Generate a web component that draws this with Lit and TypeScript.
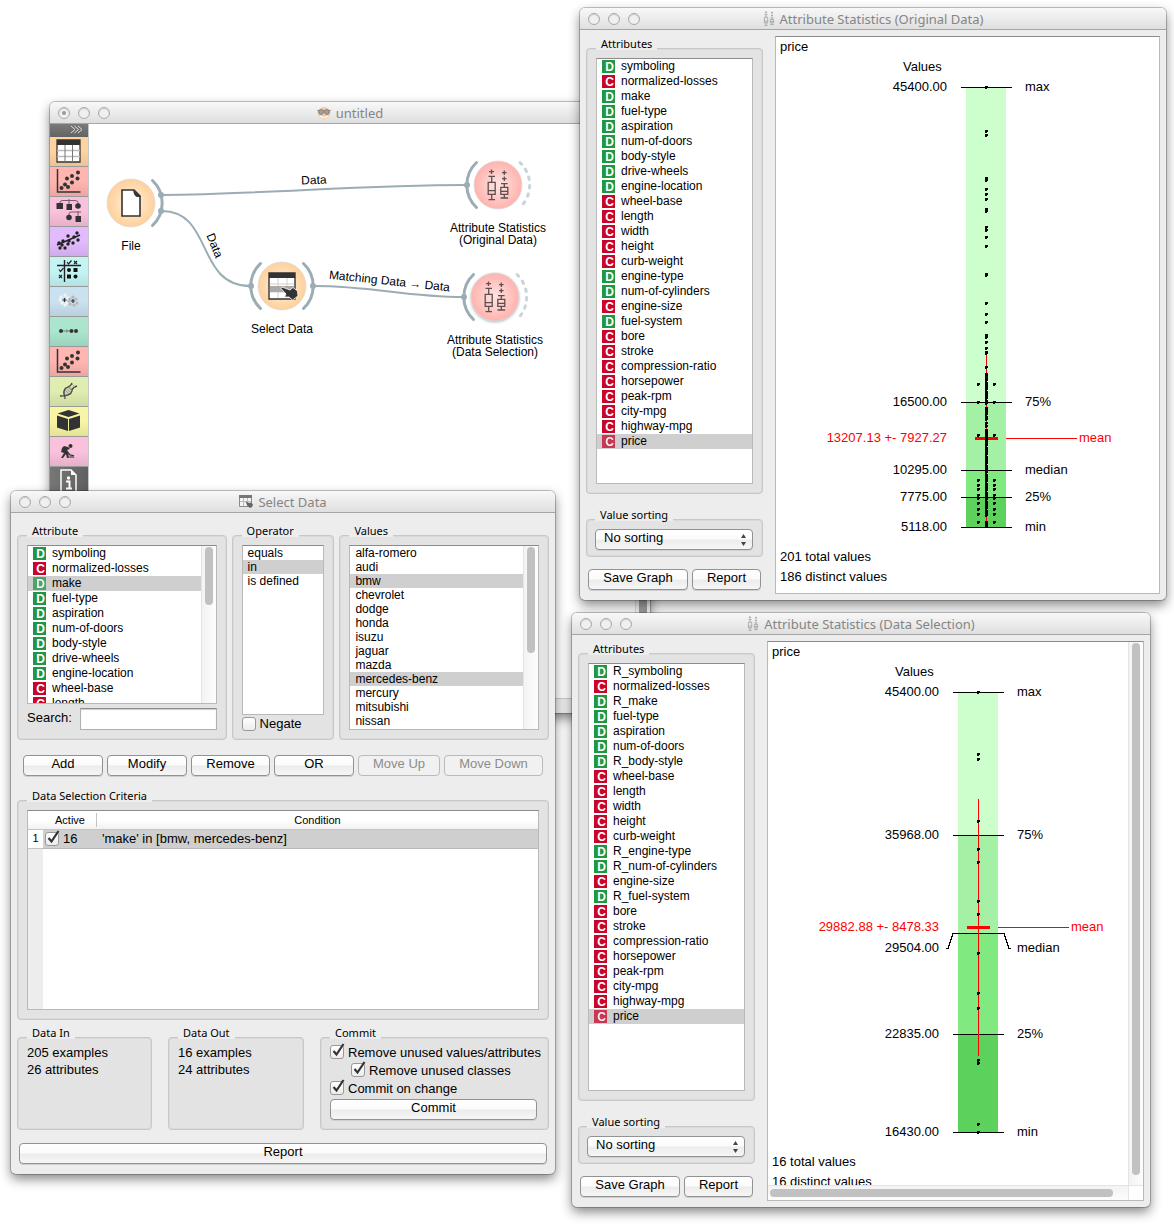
import { LitElement, html, svg, css, nothing } from "lit";
import { customElement, property } from "lit/decorators.js";
import { classMap } from "lit/directives/class-map.js";

type Kind = "D" | "C";
interface Attr { kind: Kind; name: string; }

const parse = (text: string): Attr[] =>
  text.split(" ").map((item) => {
    const [kind, name] = item.split(":");
    return { kind: kind as Kind, name };
  });

const ORIGINAL = parse(
  "D:symboling C:normalized-losses D:make D:fuel-type D:aspiration D:num-of-doors D:body-style " +
  "D:drive-wheels D:engine-location C:wheel-base C:length C:width C:height C:curb-weight " +
  "D:engine-type D:num-of-cylinders C:engine-size D:fuel-system C:bore C:stroke " +
  "C:compression-ratio C:horsepower C:peak-rpm C:city-mpg C:highway-mpg C:price");

const SELECTION = parse(
  "D:R_symboling C:normalized-losses D:R_make D:fuel-type D:aspiration D:num-of-doors " +
  "D:R_body-style C:wheel-base C:length C:width C:height C:curb-weight D:R_engine-type " +
  "D:R_num-of-cylinders C:engine-size D:R_fuel-system C:bore C:stroke C:compression-ratio " +
  "C:horsepower C:peak-rpm C:city-mpg C:highway-mpg C:price");

/* Rows that the short list in the Select Data window can show at once. */
const VISIBLE_ROWS = 11;

const MAKES = ["alfa-romero", "audi", "bmw", "chevrolet", "dodge", "honda", "isuzu", "jaguar",
  "mazda", "mercedes-benz", "mercury", "mitsubishi", "nissan"];

const shared = css`
  * { box-sizing: border-box; }
  fieldset {
    margin: 0;
    min-width: 0;
    padding: 0 9px 9px;
    border: 1px solid #c8c8c8;
    border-radius: 4px;
    background: #e3e3e3;
    box-shadow: inset 0 0 0 1px #dadada;
  }
  legend {
    height: 20px;
    padding: 0 5px;
    font: 11px/12px "Noto Sans", "Open Sans", sans-serif;
    background: linear-gradient(#ededed, #ededed) no-repeat 0 0 / 100% 12px;
  }
  button {
    height: 21px;
    padding: 0 4px 3px;
    border: 1px solid #929292;
    border-radius: 4px;
    background: linear-gradient(#ffffff 0%, #fbfbfb 48%, #ececec 52%, #f6f6f6 100%);
    box-shadow: 0 1px 0 #cfcfcf;
    font: 13px/16px "Liberation Sans", Arial, sans-serif;
    color: #000;
    white-space: nowrap;
  }
  button:disabled {
    color: #8c8c8c;
    border-color: #bababa;
    background: #f1f1f1;
    box-shadow: none;
  }
  .box {
    display: flex;
    background: #fff;
    border: 1px solid #b9b9b9;
    border-top-color: #8b8b8b;
    overflow: hidden;
  }
  .track {
    flex: none;
    width: 15px;
    padding: 1px 3px;
    border-left: 1px solid #e4e4e4;
    background: linear-gradient(90deg, #f3f3f3, #fdfdfd);
  }
  .thumb { width: 8px; border-radius: 4px; background: #c1c1c1; }
  ul {
    flex: 1;
    min-width: 0;
    margin: 0;
    padding: 0;
    list-style: none;
    font: 12px/14px "Liberation Sans", Arial, sans-serif;
  }
  li { padding-left: 5px; white-space: nowrap; }
  li.on { background: #cfcfcf; }
`;

/* ---------- icons ---------- */

const boxplots = (color: string, width = 1.5) => svg`
  <g fill="none" stroke=${color} stroke-width=${width}>
    <path d="M5.500 .5v4.500M3 2.700h5M2.500 7.300h6.500M5.700 7.300v6M2.200 13.300h7v12h-7zM2.200 21.700h7M5.700 25.300v5.400M2.500 30.700h6.500"/>
    <path d="M18.300 1.500v4.500M16 3.700h4.600M18.300 7.500v4.500M16 9.700h4.600M15 14.700h6.600M18.300 14.700v3.600M14.800 18.300h7v7h-7zM14.800 22.300h7M18.300 25.300v3.700M14.500 29h7.600"/>
  </g>`;

const iconPlots = html`<svg width="12" height="15" viewBox="0 0 24 32">${boxplots("#a4a4a4", 1.8)}</svg>`;

const iconOrange = html`<svg width="14" height="14" viewBox="0 0 14 14">
  <circle cx="7" cy="7" r="6" fill="#f4c99a"/>
  <path d="M3 10q4 3 8 0" fill="none" stroke="#fff" stroke-width="1.200"/>
  <path d="M0 4.500h14" stroke="#a09890" stroke-width="1.200"/>
  <circle cx="4" cy="6" r="2.400" fill="#9da3aa" stroke="#8a7d70"/>
  <circle cx="10" cy="6" r="2.400" fill="#9da3aa" stroke="#8a7d70"/>
</svg>`;

const hand = "M-1 1.500L0 0 8 3 11 .5 15.500 4 16 9 10.500 13 7 10 2.500 10 4 7z";

const iconSelect = html`<svg width="14" height="13" viewBox="0 0 14 13">
  <path d="M.5.5h12v11h-12z" fill="#f4f4f4" stroke="#8a8a8a"/>
  <path d="M0 0h13v3H0z" fill="#777"/>
  <path d="M1 6.500h11M4.500 3v8M8.500 3v8" stroke="#bbb"/>
  <path d="M6.500 6.500l4 1.500 1.500-.5 2 2-1 2.500-2 1-2.500-2z" fill="#666"/>
</svg>`;

const scatter = svg`<path d="M1.500 0v23h23" fill="none" stroke="#333" stroke-width="1.500"/>
  ${[[5.500, 19], [9, 15.500], [12, 18], [11, 9.500], [16, 13.500], [16, 7], [21.500, 9.500], [22, 3.500]].map(
    ([x, y]) => svg`<circle cx=${x} cy=${y} r="2" fill="#333"/>`)}`;

const TOOLS = [
  { name: "data", art: svg`<path d="M1 1h23v22H1z" fill="#fff" stroke="#333" stroke-width="1.300"/>
      <path d="M1 1h23v5H1z" fill="#333"/><path d="M1 11.500h23M1 17.500h23" stroke="#bbb" stroke-width="1.500"/>
      <path d="M9 6v17M16.500 6v17" stroke="#777"/>` },
  { name: "visualize", art: scatter },
  { name: "classify", art: svg`<path d="M4 5V3.500q0-2 3-2h12q3 0 3 2V6M13 0v6M13 16v-1q0-2 2-2h10M22 12v6" fill="none" stroke="#7a5a68"/>
      <path d="M.5 4h6.500v6H.5zM10.500 5h5.500v6h-5.500zM19.500 17h5.500v6h-5.500z" fill="#333"/>
      <circle cx="22" cy="7" r="2.800" fill="#333"/><circle cx="13" cy="18.500" r="2.800" fill="#333"/>` },
  { name: "regression", art: svg`<path d="M1 16L24 6" stroke="#222" stroke-width="1.500"/>
      ${[[3, 14], [4, 19], [9, 19], [7, 12], [6, 16], [12, 7], [13, 12], [17, 14], [18, 8], [21, 4], [22, 11], [12, 15]].map(
        ([x, y]) => svg`<circle cx=${x} cy=${y} r="1.700" fill="#222"/>`)}` },
  { name: "evaluate", art: svg`<path d="M8.500 1v22M1 6.500h24" stroke="#222" stroke-width="1.400"/>
      <path d="M11 3l1.500 2 3-3.500M3 10.500l1.500 2 3-3.500M18 2l3 3M21 2l-3 3M3 16l3 3M6 16l-3 3" fill="none" stroke="#222" stroke-width="1.200"/>
      <circle cx="13" cy="11" r="2" fill="#111"/><path d="M17.500 9h4v4h-4zM11 15.500h4v4h-4z" fill="#111"/><circle cx="19.500" cy="17.500" r="2" fill="#111"/>` },
  { name: "unsupervised", art: svg`${[[5, 8], [9, 6], [12, 9], [6, 14], [11, 14], [4, 11], [9, 16]].map(
        ([x, y]) => svg`<circle cx=${x} cy=${y} r="1.700" fill="#f2f2f2"/>`)}
      ${[[14, 10], [17, 8], [20, 10], [21, 14], [18, 16], [14, 15], [13, 12]].map(
        ([x, y]) => svg`<circle cx=${x} cy=${y} r="1.600" fill="#b4b8bc"/>`)}
      <path d="M8.500 9v4M6.500 11h4M17 10v4M15 12h4" stroke="#333" stroke-width="1.200"/>` },
  { name: "associate", art: svg`<path d="M6 12h8" stroke="#7c9c90" stroke-width="1.400"/><path d="M10 10l3 2-3 2z" fill="#7c9c90"/>
      <circle cx="5" cy="12" r="2" fill="#333"/><circle cx="15.500" cy="12" r="2" fill="#333"/><circle cx="20" cy="12" r="2" fill="#333"/>` },
  { name: "scatter", art: scatter },
  { name: "bio", art: svg`<circle cx="12" cy="12" r="4" fill="#cfd8a8" stroke="#999"/>
      <path d="M4 17q6 0 8-1 4-2 4-5 1-3 5-4M9 20q0-3-1-5-1-5 4-7 3-1 4-4" fill="none" stroke="#444" stroke-width="1.300"/>
      <path d="M10 9l5 5M9 11l4 4M12 8l4 4M6 16l3 3M16 5l3 3" stroke="#888" stroke-width=".8"/>` },
  { name: "prototypes", art: svg`<path d="M12.500 1l11 3.500-11 3.500-11-3.500zM1 6.500l11 3.500v12L1 18.500zM24 6.500l-11 3.500v12l11-3.500z" fill="#333"/>` },
  { name: "development", art: svg`<circle cx="14.500" cy="7" r="2" fill="#333"/>
      <path d="M12 8L8 7l-2 2-1 4 3 1-3 5h2l3-4 1 4h2l-1-6-1-2 3-1z" fill="#333"/>
      <path d="M8 9l6 7 4 1" fill="none" stroke="#333" stroke-width="1.300"/>
      <path d="M12 19q3-5 7 0z" fill="#777"/>` },
  { name: "info", art: svg`<path d="M5 1h10l5 5v20H5z" fill="none" stroke="#fff" stroke-width="1.500"/><path d="M15 1v5h5" fill="#fff"/>
      <circle cx="12.500" cy="9" r="1.700" fill="#fff"/><path d="M10 12.500h3.500V19M10 19.500h6" fill="none" stroke="#fff" stroke-width="2"/>` },
];

/* ---------- window frame ---------- */

@customElement("desk-window")
class DeskWindow extends LitElement {
  @property() heading = "";
  @property({ type: Boolean }) edited = false;

  static styles = [shared, css`
    :host {
      display: flex;
      flex-direction: column;
      background: #ededed;
      border-radius: 5px;
      overflow: hidden;
      box-shadow: 0 0 0 1px rgba(0, 0, 0, 0.22), 0 5px 12px rgba(0, 0, 0, 0.48);
    }
    header {
      display: grid;
      grid-template-columns: 1fr auto 1fr;
      align-items: center;
      height: 22px;
      padding: 0 8px;
      border-bottom: 1px solid #a5a5a5;
      background: linear-gradient(#f8f8f8, #dfdfdf);
    }
    .lights { display: flex; gap: 8px; }
    .light {
      display: grid;
      place-items: center;
      width: 12px;
      height: 12px;
      border: 1px solid #a9a9a9;
      border-radius: 50%;
      background: #f0f0f0;
      box-shadow: inset 0 1px 1px #ccc;
    }
    .dot { width: 4px; height: 4px; border-radius: 50%; background: #999; }
    .title {
      display: flex;
      align-items: center;
      gap: 5px;
      font: 13px/20px "Noto Sans", "Open Sans", sans-serif;
      color: #858585;
      white-space: nowrap;
    }
    .icon { display: flex; }
    .body { flex: 1; display: flex; flex-direction: column; min-height: 0; }
  `];

  render() {
    return html`
      <header>
        <div class="lights">
          <span class="light">${this.edited ? html`<span class="dot"></span>` : nothing}</span>
          <span class="light"></span><span class="light"></span>
        </div>
        <div class="title"><span class="icon"><slot name="icon"></slot></span><span>${this.heading}</span></div>
      </header>
      <div class="body"><slot></slot></div>`;
  }
}

/* ---------- list of attributes ---------- */

@customElement("attribute-list")
class AttributeList extends LitElement {
  @property({ attribute: false }) items: Attr[] = [];
  @property() selected = "";

  static styles = [shared, css`
    :host { display: block; flex: 1; min-width: 0; overflow: hidden; }
    li { display: flex; align-items: flex-start; gap: 6px; height: 15px; }
    .badge {
      width: 13px;
      height: 13px;
      margin-top: 1px;
      padding-left: 2px;
      font: bold 12px/14px "Liberation Sans", Arial, sans-serif;
      color: #fff;
      overflow: hidden;
      text-align: center;
    }
    .D { background: #1f9745; }
    .C { background: #c8052b; }
    .on .badge { opacity: 0.75; }
  `];

  render() {
    return html`<ul role="listbox">${this.items.map((a) => {
      const on = a.name === this.selected;
      return html`<li role="option" aria-selected=${on} class=${classMap({ on })}>
        <span class="badge ${a.kind}">${a.kind}</span><span>${a.name}</span></li>`;
    })}</ul>`;
  }
}

/* ---------- distribution plot ---------- */

interface Plot {
  total: string; distinct: string;
  marks: { y: number; value: string; label: string; bend?: number }[];
  mean: { y: number; value: string; from: number; to: number };
  dots: number[]; side: number[]; solid: [number, number][];
}

const FILLS = ["#ccffcc", "#a4f0a4", "#80ea80", "#5cd15c"];
const AXIS = 210;

@customElement("value-plot")
class ValuePlot extends LitElement {
  @property({ attribute: false }) data!: Plot;

  static styles = css`
    :host { display: block; overflow: hidden; }
    svg { display: block; }
    text { font: 13px "Liberation Sans", Arial, sans-serif; }
    .end { text-anchor: end; }
    .red { fill: #f00; }
    .line { fill: none; stroke: #000; shape-rendering: crispEdges; }
    .crisp { shape-rendering: crispEdges; }
  `;

  private dot(x: number, y: number) {
    return svg`<path d="M${x - 1} ${y - 1}h3v2h-1v1h-2z"/>`;
  }

  render() {
    const { marks, mean, dots, side, solid, total, distinct } = this.data;
    const packed = solid.flatMap(([a, b]) => {
      const ys: number[] = [];
      for (let y = a + 1, k = 0; y < b; k++, y += k % 4 ? 2 : 3) ys.push(y);
      return ys;
    });
    return html`<svg width="360" height="556" viewBox="0 0 360 556">
      <text x="4" y="14">price</text>
      <text x="127" y="34">Values</text>
      <g class="crisp">
        ${marks.slice(1).map((m, i) => svg`<rect x="190" y=${marks[i].y} width="40" height=${m.y - marks[i].y} fill=${FILLS[i]}/>`)}
      </g>
      ${marks.map((m) => svg`
        <path class="line" d=${m.bend
          ? `M178 ${m.bend + 0.5}h2L185 ${m.y + 0.5}H236L241 ${m.bend + 0.5}h2`
          : `M185 ${m.y + 0.5}h51`}/>
        <text class="end" x="171" y=${(m.bend ?? m.y) + 4}>${m.value}</text>
        <text x="249" y=${(m.bend ?? m.y) + 4}>${m.label}</text>`)}
      <g class="crisp">
        <rect x="210" y=${mean.from} width="1" height=${mean.to - mean.from} fill="#f00"/>
        ${solid.map(([a, b]) => svg`<rect x="209" y=${a} width="2" height=${b - a}/>`)}
        ${[...dots, ...packed].map((y) => this.dot(AXIS, y))}
        ${side.map((y) => [this.dot(202, y), this.dot(218, y)])}
        <rect x="199" y=${mean.y - 1} width="23" height="3" fill="#f00"/>
        <rect x="230" y=${mean.y} width="71" height="1" fill="#f00"/>
        ${solid.length ? svg`<rect x="209" y=${mean.y - 2} width="3" height="5"/>` : nothing}
      </g>
      <text class="end red" x="171" y=${mean.y + 4}>${mean.value}</text>
      <text class="red" x="303" y=${mean.y + 4}>mean</text>
      <text x="4" y="524">${total}</text>
      <text x="4" y="544">${distinct}</text>
    </svg>`;
  }
}

const PLOT_ORIGINAL: Plot = {
  total: "201 total values",
  distinct: "186 distinct values",
  marks: [
    { y: 50, value: "45400.00", label: "max" },
    { y: 365, value: "16500.00", label: "75%" },
    { y: 433, value: "10295.00", label: "median" },
    { y: 460, value: "7775.00", label: "25%" },
    { y: 490, value: "5118.00", label: "min" },
  ],
  mean: { y: 401, value: "13207.13 +- 7927.27", from: 314, to: 490 },
  dots: [50, 94, 98, 141, 143, 152, 157, 162, 172, 174, 190, 193, 200, 209, 237, 238, 266, 277, 285, 298, 300,
    305, 311, 315, 316, 330, 386, 389],
  side: [347, 365, 398, 443, 448, 452, 458, 461, 466, 472, 477, 485],
  solid: [[336, 367], [370, 384], [392, 480], [484, 491]],
};

const PLOT_SELECTION: Plot = {
  total: "16 total values",
  distinct: "16 distinct values",
  marks: [
    { y: 50, value: "45400.00", label: "max" },
    { y: 193, value: "35968.00", label: "75%" },
    { y: 291, value: "29504.00", label: "median", bend: 306 },
    { y: 392, value: "22835.00", label: "25%" },
    { y: 490, value: "16430.00", label: "min" },
  ],
  mean: { y: 285, value: "29882.88 +- 8478.33", from: 157, to: 414 },
  dots: [50, 112, 117, 179, 207, 220, 259, 272, 311, 351, 366, 418, 421, 482, 490],
  side: [],
  solid: [],
};

/* ---------- attribute statistics ---------- */

@customElement("attribute-statistics")
class AttributeStatistics extends LitElement {
  @property({ attribute: false }) items: Attr[] = [];
  @property({ attribute: false }) plot!: Plot;
  @property({ type: Boolean }) scrolling = false;

  static styles = [shared, css`
    :host { display: grid; grid-template-columns: 177px minmax(0, 1fr); gap: 12px; padding: 6px; }
    .side { display: flex; flex-direction: column; padding: 2px 0 4px; }
    .attributes { flex: 1; display: flex; }
    .attributes .box { flex: 1; min-width: 0; }
    .sorting { margin-top: 15px; padding: 0 9px 6px 8px; }
    .picker { position: relative; display: block; }
    select {
      appearance: none;
      display: block;
      width: 100%;
      height: 21px;
      padding: 0 20px 3px 8px;
      border: 1px solid #929292;
      border-radius: 4px;
      background: linear-gradient(#ffffff 0%, #fbfbfb 48%, #ececec 52%, #f6f6f6 100%);
      box-shadow: 0 1px 0 #cfcfcf;
      font: 13px/16px "Liberation Sans", Arial, sans-serif;
      color: #000;
    }
    .arrows { position: absolute; right: 6px; top: 5px; pointer-events: none; }
    .actions { display: grid; grid-template-columns: 100fr 69fr; gap: 4px; margin-top: 12px; padding: 0 2px; }
    .panel { display: grid; grid-template-columns: minmax(0, 1fr); }
    .panel.scroll { grid-template-columns: minmax(0, 1fr) 15px; grid-template-rows: 543px 15px; }
    .vbar { padding: 1px 3px; border-left: 1px solid #e4e4e4; background: linear-gradient(90deg, #f3f3f3, #fdfdfd); }
    .vthumb { width: 8px; height: 532px; border-radius: 4px; background: #c1c1c1; }
    .hbar { padding: 3px 15px 3px 2px; border-top: 1px solid #e4e4e4; background: linear-gradient(#f3f3f3, #fdfdfd); }
    .hthumb { height: 8px; border-radius: 4px; background: #c1c1c1; }
    .corner { border: 1px solid #e4e4e4; border-width: 1px 0 0 1px; }
  `];

  render() {
    return html`
      <div class="side">
        <fieldset class="attributes">
          <legend>Attributes</legend>
          <div class="box"><attribute-list .items=${this.items} selected="price"></attribute-list></div>
        </fieldset>
        <fieldset class="sorting">
          <legend>Value sorting</legend>
          <span class="picker">
            <select aria-label="Value sorting"><option>No sorting</option></select>
            <svg class="arrows" width="7" height="12" viewBox="0 0 7 12"><path d="M3.500 0l2.500 4H1zM3.500 12L6 8H1z" fill="#444"/></svg>
          </span>
        </fieldset>
        <div class="actions"><button>Save Graph</button><button>Report</button></div>
      </div>
      <div class="box panel ${this.scrolling ? "scroll" : ""}">
        <value-plot .data=${this.plot}></value-plot>
        ${this.scrolling ? html`
          <div class="vbar"><div class="vthumb"></div></div>
          <div class="hbar"><div class="hthumb"></div></div>
          <div class="corner"></div>` : nothing}
      </div>`;
  }
}

/* ---------- select data ---------- */

@customElement("select-data")
class SelectData extends LitElement {
  static styles = [shared, css`
    :host {
      display: flex;
      flex-direction: column;
      padding: 12px 6px 10px;
      font: 13px/17px "Liberation Sans", Arial, sans-serif;
    }
    .top { display: grid; grid-template-columns: 210fr 103fr 210fr; gap: 5px; }
    .top fieldset { display: flex; flex-direction: column; }
    .attrs { height: 159px; }
    .attrs .thumb { height: 58px; }
    .search { display: flex; align-items: center; gap: 8px; margin-top: 4px; }
    .search label { padding-bottom: 3px; }
    .search input {
      flex: 1;
      min-width: 0;
      height: 22px;
      border: 1px solid #b0b0b0;
      border-top-color: #8b8b8b;
      box-shadow: inset 0 1px 1px #ccc;
    }
    .ops { flex: 1; }
    .makes { height: 185px; }
    .makes .thumb { height: 106px; }
    .check { display: flex; align-items: center; gap: 4px; height: 18px; white-space: nowrap; }
    .negate { height: 13px; margin-top: 2px; }
    .mark { position: relative; display: block; width: 14px; height: 14px; }
    .mark input {
      appearance: none;
      display: block;
      width: 14px;
      height: 14px;
      margin: 0;
      border: 1px solid #999;
      border-radius: 3px;
      background: linear-gradient(#fff, #ececec);
    }
    .mark svg { position: absolute; left: 0; top: -3px; pointer-events: none; }
    .mark input:not(:checked) + svg { display: none; }
    .row { display: grid; grid-template-columns: 80fr 80fr 79fr 80fr 82fr 99fr; gap: 4px; margin: 15px 6px 14px; }
    .criteria {
      display: block;
      min-height: 200px;
      background: linear-gradient(90deg, #ededed 15px, #fff 15px);
    }
    table { width: 100%; border-collapse: collapse; table-layout: fixed; }
    th { font-weight: normal; padding: 0; }
    thead th { height: 18px; font-size: 11px; line-height: 14px; background: linear-gradient(#fff 50%, #f2f2f2); border-bottom: 1px solid #c4c4c4; }
    .num { width: 15px; }
    .active { width: 54px; }
    .divided { background-image: linear-gradient(#c4c4c4, #c4c4c4), linear-gradient(#fff 50%, #f2f2f2); background-size: 1px 14px, 100% 100%; background-position: 100% 50%, 0 0; background-repeat: no-repeat; }
    tbody td { padding: 0; height: 19px; background: #cfcfcf; border-bottom: 1px solid #b8b8b8; white-space: nowrap; }
    tbody th { font-size: 11px; background: #fff; border-bottom: 1px solid #c4c4c4; }
    td .check { padding-left: 2px; }
    td.cond { padding-left: 5px; }
    .bottom { display: grid; grid-template-columns: 135fr 136fr 229fr; gap: 16px; margin-top: 7px; }
    .counts { margin-top: -3px; white-space: nowrap; }
    .commit { margin-top: -4px; }
    .commit button { display: block; width: 207px; max-width: 100%; margin-top: 2px; }
    .nested { padding-left: 21px; }
    .report { margin: 13px 2px 0; }
  `];

  private check(text: unknown, checked: boolean, extra = "") {
    return html`<label class="check ${extra}"><span class="mark"><input type="checkbox" .checked=${checked}>
      <svg width="16" height="16" viewBox="0 0 16 16"><path d="M3.500 9l3 3.500L13.500 2" fill="none" stroke="#333" stroke-width="2.200"/></svg>
    </span><span>${text}</span></label>`;
  }

  render() {
    const option = (name: string, on: boolean) =>
      html`<li role="option" aria-selected=${on} class=${classMap({ on })}>${name}</li>`;
    return html`
      <div class="top">
        <fieldset>
          <legend>Attribute</legend>
          <div class="box attrs">
            <attribute-list .items=${ORIGINAL.slice(0, VISIBLE_ROWS)} selected="make"></attribute-list>
            <div class="track"><div class="thumb"></div></div>
          </div>
          <div class="search"><label for="search">Search:</label><input id="search" type="text"></div>
        </fieldset>
        <fieldset>
          <legend>Operator</legend>
          <div class="box ops"><ul role="listbox">
            ${["equals", "in", "is defined"].map((o) => option(o, o === "in"))}
          </ul></div>
          ${this.check("Negate", false, "negate")}
        </fieldset>
        <fieldset>
          <legend>Values</legend>
          <div class="box makes">
            <ul role="listbox">${MAKES.map((m) => option(m, m === "bmw" || m === "mercedes-benz"))}</ul>
            <div class="track"><div class="thumb"></div></div>
          </div>
        </fieldset>
      </div>
      <div class="row">
        <button>Add</button><button>Modify</button><button>Remove</button><button>OR</button>
        <button disabled>Move Up</button><button disabled>Move Down</button>
      </div>
      <fieldset>
        <legend>Data Selection Criteria</legend>
        <div class="box criteria">
          <table>
            <thead><tr><th class="num"></th><th class="active divided">Active</th><th>Condition</th></tr></thead>
            <tbody><tr>
              <th>1</th>
              <td>${this.check("16", true)}</td>
              <td class="cond">'make' in [bmw, mercedes-benz]</td>
            </tr></tbody>
          </table>
        </div>
      </fieldset>
      <div class="bottom">
        <fieldset><legend>Data In</legend><div class="counts">205 examples<br>26 attributes</div></fieldset>
        <fieldset><legend>Data Out</legend><div class="counts">16 examples<br>24 attributes</div></fieldset>
        <fieldset><legend>Commit</legend>
          <div class="commit">
            ${this.check("Remove unused values/attributes", true)}
            ${this.check("Remove unused classes", true, "nested")}
            ${this.check("Commit on change", true)}
            <button>Commit</button>
          </div>
        </fieldset>
      </div>
      <button class="report">Report</button>`;
  }
}

/* ---------- workflow canvas ---------- */

@customElement("workflow-canvas")
class WorkflowCanvas extends LitElement {
  static styles = [shared, css`
    :host { display: flex; flex-direction: column; flex: 1; }
    .main { flex: 1; display: flex; min-height: 574px; background: #fff; }
    .tools { width: 39px; border-right: 1px solid #c0c8cc; background: #666; }
    .more { display: flex; justify-content: flex-end; padding: 1px 5px 0 0; height: 13px; background: linear-gradient(#7a7a7a, #636363); }
    .tool {
      display: grid;
      place-items: center;
      width: 100%;
      height: 30px;
      padding: 0;
      border: 0;
      border-bottom: 1px solid #999;
      border-radius: 0;
      box-shadow: none;
    }
    .data { background: linear-gradient(#ffd3a0 50%, #edc292); }
    .visualize, .scatter { background: linear-gradient(#ffb5b0 50%, #eca6a2); }
    .classify, .development { background: linear-gradient(#fac1dc 50%, #e6b0ca); }
    .regression { background: linear-gradient(#e2bbff 50%, #d0abec); }
    .evaluate { background: linear-gradient(#c3f4f3 50%, #b2e2e2); }
    .unsupervised { background: linear-gradient(#cae1f0 50%, #b9cfdd); }
    .associate { background: linear-gradient(#abe5cd 50%, #9cd2bc); }
    .bio { background: linear-gradient(#dfedb0 50%, #cddaa1); }
    .prototypes { background: linear-gradient(#f8f5a4 50%, #e5e296); }
    .info { background: linear-gradient(90deg, #777, #606060); }
    .canvas { flex: 1; min-width: 0; overflow: hidden; }
    .canvas svg { display: block; }
    .rail { width: 15px; padding: 2px 3px; border-left: 1px solid #ddd; background: #f6f6f6; }
    .grip { width: 8px; height: 560px; border-radius: 4px; background: #a0a0a0; }
    .status { height: 15px; border-top: 1px solid #ccc; background: #ededed; }
    text { font: 12px "Liberation Sans", Arial, sans-serif; text-anchor: middle; }
  `];

  private node(x: number, y: number, fill: string, lines: string[], sides: string, art: unknown) {
    return svg`<g transform="translate(${x} ${y})">
      <circle r="24" fill=${`url(#${fill})`} stroke="#dcdcdc" stroke-width=".8"/>
      ${sides.includes("l") ? svg`<path d="M-21.500-22.500A31 31 0 0 0-21.500 22.500" fill="none" stroke="#9cacb5" stroke-width="3" stroke-linecap="round"/><circle cx="-31" r="3" fill="#9cacb5"/>` : nothing}
      ${sides.includes("r") ? svg`<path d="M21.500-22.500A31 31 0 0 1 21.500 22.500" fill="none" stroke="#9cacb5" stroke-width="3" stroke-linecap="round"/>` : nothing}
      ${sides.includes("d") ? svg`<path d="M22-22.500A31 31 0 0 1 22 22.500" fill="none" stroke="#c9d4d8" stroke-width="3" stroke-linecap="round" stroke-dasharray="2.500 6"/>` : nothing}
      ${art}
      ${lines.map((t, i) => svg`<text y=${47 + i * 12}>${t}</text>`)}
    </g>`;
  }

  render() {
    const stats = svg`<g transform="translate(-12 -16)">${boxplots("#5c5050", 1.3)}</g>`;
    const page = svg`<path d="M-9-13H3l6 6v20H-9z" fill="#fff" stroke="#333" stroke-width="1.600"/><path d="M2-13l8 7H6q-3-1-4-7z" fill="#333"/>`;
    const table = svg`<path d="M-13-13h26v26h-26z" fill="#fff" stroke="#333" stroke-width="1.400"/>
      <path d="M-4-8v20M5-8v20M-12-2h24M-12 6h24" stroke="#d8ccc4"/>
      <path d="M-13-13h26v5h-26z" fill="#333"/><path d="M-12 0h24v6h-24z" fill="#aaa"/>
      <path transform="translate(0 1)" d=${hand} fill="#333" stroke="#fff" stroke-width=".8"/>`;
    return html`
      <div class="main">
        <div class="tools">
          <div class="more"><svg width="13" height="9" viewBox="0 0 13 9"><path d="M1 1l4 3.500-4 3.500M4.500 1l4 3.500-4 3.500M8 1l4 3.500-4 3.500" fill="none" stroke="#ddd"/></svg></div>
          ${TOOLS.map((t) => html`<button class="tool ${t.name}" aria-label=${t.name}>
            <svg width="26" height="25" viewBox="0 0 26 25">${t.art}</svg></button>`)}
        </div>
        <div class="canvas">
          <svg width="546" height="574" viewBox="0 0 546 574">
            <defs>
              <radialGradient id="warm"><stop offset="0" stop-color="#fff2e2"/><stop offset="1" stop-color="#ffd09a"/></radialGradient>
              <radialGradient id="rose"><stop offset="0" stop-color="#ffe4e2"/><stop offset="1" stop-color="#ffb3ae"/></radialGradient>
              <filter id="glow" x="-50%" y="-50%" width="200%" height="200%"><feGaussianBlur stdDeviation="1.500"/></filter>
            </defs>
            <g fill="none" stroke="#9cacb5" stroke-width="2">
              <path d="M73 71C180 70 270 61 378 61"/>
              <path d="M73 87C124 87 107 162 161 162"/>
              <path d="M225 162C285 162 315 173 375 173"/>
            </g>
            <g fill="#9cacb5"><circle cx="72" cy="71" r="3"/><circle cx="72" cy="87" r="3"/><circle cx="224" cy="162" r="3"/></g>
            <circle cx="406" cy="174" r="24" fill="#9fb0ba" filter="url(#glow)"/>
            ${this.node(42, 79, "warm", ["File"], "r", page)}
            ${this.node(193, 162, "warm", ["Select Data"], "lr", table)}
            ${this.node(409, 61, "rose", ["Attribute Statistics", "(Original Data)"], "ld", stats)}
            ${this.node(406, 173, "rose", ["Attribute Statistics", "(Data Selection)"], "ld", stats)}
            <text transform="translate(225 60) rotate(-2)">Data</text>
            <text transform="translate(122 123) rotate(68)">Data</text>
            <text transform="translate(300 161) rotate(6)">Matching Data → Data</text>
          </svg>
        </div>
        <div class="rail"><div class="grip"></div></div>
      </div>
      <div class="status"></div>`;
  }
}

@customElement("app-root")
class AppRoot extends LitElement {
  static styles = css`
    :host { display: block; }
    .desktop { position: relative; min-height: 100vh; background: #fff; overflow: hidden; }
    desk-window { position: absolute; }
    .flow { left: 50px; top: 102px; width: 600px; }
    .select { left: 11px; top: 491px; width: 544px; }
    .original { left: 580px; top: 8px; width: 586px; }
    .selection { left: 572px; top: 613px; width: 578px; }
    svg { display: block; }
  `;

  render() {
    return html`<main class="desktop">
      <desk-window class="flow" heading="untitled" edited>
        <span slot="icon">${iconOrange}</span>
        <workflow-canvas></workflow-canvas>
      </desk-window>
      <desk-window class="select" heading="Select Data">
        <span slot="icon">${iconSelect}</span>
        <select-data></select-data>
      </desk-window>
      <desk-window class="original" heading="Attribute Statistics (Original Data)">
        <span slot="icon">${iconPlots}</span>
        <attribute-statistics .items=${ORIGINAL} .plot=${PLOT_ORIGINAL}></attribute-statistics>
      </desk-window>
      <desk-window class="selection" heading="Attribute Statistics (Data Selection)">
        <span slot="icon">${iconPlots}</span>
        <attribute-statistics .items=${SELECTION} .plot=${PLOT_SELECTION} scrolling></attribute-statistics>
      </desk-window>
    </main>`;
  }
}
